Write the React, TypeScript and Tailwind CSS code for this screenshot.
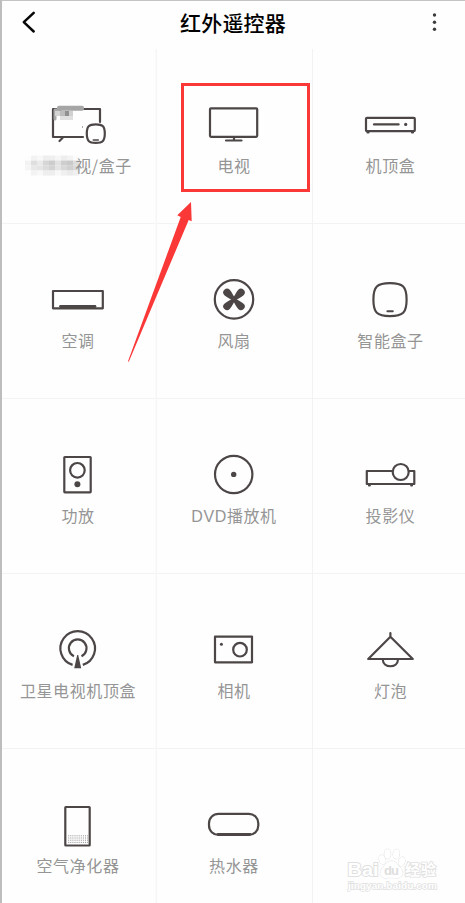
import type { ReactNode } from 'react';

const INK = '#4c4646';

const TvBoxIcon = () => (
  <>
    <path d="M5 12H-25V-16H22V-3" />
    <path d="M-18.5 16l3-3" />
    <path d="M-23 -6V-15H-18" stroke="#aaa" strokeWidth="3" />
    <rect x="-21" y="-19.3" width="27" height="5" rx="2" fill="#a5a5a5" stroke="none" />
    <g stroke="none">
      <rect x="-23" y="-14" width="5" height="5" fill="#d4d4d4" />
      <rect x="-18" y="-14" width="5" height="5" fill="#bcbcbc" />
      <rect x="-13" y="-14" width="4" height="5" fill="#909090" />
      <rect x="-9" y="-14" width="4" height="5" fill="#d0d0d0" />
      <rect x="-18" y="-9" width="13" height="4" fill="#e0e0e0" />
      <rect x="4" y="1" width="1" height="2" fill="#aaa" />
    </g>
    <path d="M17.8 -.6c7 0 9 2 9 9.2s-2 9.2-9 9.2-9-2-9-9.2 2-9.2 9-9.2Z" />
    <path d="M15.3 15h5" strokeWidth="1.6" />
  </>
);

const TvIcon = () => (
  <>
    <rect x="-24" y="-16.7" width="47.2" height="28.5" rx="1" />
    <path d="M-8 15.5H7.5M0 12v3" />
  </>
);

const SetTopIcon = () => (
  <>
    <rect x="-24" y="-7.2" width="48.8" height="13.4" rx="1" />
    <path d="M-16 -.6H8.6" />
    <circle cx="15.7" cy="-.6" r="1.6" fill={INK} stroke="none" />
    <path d="M-22.5 7.5h1M22 7.5h1" />
  </>
);

const AirConIcon = () => (
  <>
    <rect x="-25" y="-9" width="49.8" height="17.3" />
    <path d="M-17.5 6.5H17" strokeWidth="2.8" />
  </>
);

const bladeAngles = [45, 135, 225, 315];
const FanIcon = () => (
  <>
    <circle cx="0" cy="-.6" r="19.2" />
    <g fill={INK} stroke="none" transform="translate(0 -.6)">
      {bladeAngles.map((a) => (
        <path
          key={a}
          transform={`rotate(${a})`}
          d="M-1.600 1.600C-1.600 -3 -3.800 -6.500 -3.800 -9.800A3.800 3.800 0 0 1 3.800 -9.800C3.800 -6.500 1.600 -3 1.600 1.600Z"
        />
      ))}
    </g>
  </>
);

const SmartBoxIcon = () => (
  <>
    <path d="M0 -16.8c13 0 16.6 3.5 16.6 16.5s-3.6 16.5-16.6 16.5-16.6-3.5-16.6-16.5 3.6-16.5 16.6-16.5Z" />
    <path d="M-2.6 11.3H2.8" strokeWidth="2" />
  </>
);

const SpeakerIcon = () => (
  <>
    <rect x="-13.7" y="-18" width="26.4" height="35.3" rx=".5" />
    <circle cx="-.6" cy="-4.7" r="7.3" />
    <circle cx="-.6" cy="9.2" r="3" fill={INK} stroke="none" />
  </>
);

const DiscIcon = () => (
  <>
    <circle cx="-.3" cy="-.5" r="18.7" />
    <circle cx="-.3" cy="-.6" r="2.7" fill={INK} stroke="none" />
  </>
);

const ProjectorIcon = () => (
  <>
    <path d="M2.6 -4H-23.2V9H24.3V-4H19" />
    <circle cx="10.7" cy="-3" r="8" />
    <path d="M-21 10.5h.8M21.2 10.5h.8" />
  </>
);

const SatelliteIcon = () => (
  <>
    <path d="M-5.4 14.9A17.3 17.3 0 1 1 4.8 14.9" strokeLinecap="butt" />
    <path d="M-4.1 6.2A8.8 8.8 0 1 1 3.5 6.2" strokeLinecap="butt" />
    <path d="M-.8 5h1L3.2 18.3H-3.8Z" fill={INK} stroke="none" />
  </>
);

const CameraIcon = () => (
  <>
    <rect x="-19" y="-13.3" width="37" height="25.6" />
    <circle cx="6" cy="-.3" r="6.8" />
    <circle cx="-12.6" cy="-5.7" r="1.5" fill={INK} stroke="none" />
  </>
);

const LampIcon = () => (
  <>
    <path d="M.4 -16.8V-13.2L-21.8 9H22.8L.4 -13.2" />
    <path d="M-7.2 9.5C-7 18.5 7.8 18.5 8 9.5" />
  </>
);

const dotRows = [10.8, 13, 15.2, 17.4];
const PurifierIcon = () => (
  <>
    <rect x="-12.7" y="-18" width="24.4" height="38.5" rx=".5" />
    {dotRows.map((y) => (
      <path key={y} d={`M-9.8 ${y}H10`} stroke="#918e8e" strokeWidth="1" strokeDasharray="1 1.1" strokeLinecap="butt" />
    ))}
  </>
);

const HeaterIcon = () => (
  <>
    <rect x="-25" y="-11.2" width="49.3" height="21.2" rx="9.5" />
    <path d="M-16 9.3H16" strokeWidth="2.8" />
  </>
);

const mosaic = [
  ['#fdfdfd', '#f3f3f3', '#f8f8f8', '#eeeeee', '#efefef', '#f6f6f6', '#eeeeee', '#f3f3f3', '#fbfbfb'],
  ['#f3f3f3', '#dfdfdf', '#eaeaea', '#d6d6d6', '#cccccc', '#e2e2e2', '#cecece', '#c9c9c9', '#dedede'],
  ['#f5f5f5', '#e8e8e8', '#e5e5e5', '#dcdcdc', '#d3d3d3', '#e4e4e4', '#d8d8d8', '#d0d0d0', '#dadada'],
  ['#fdfdfd', '#f3f3f3', '#f8f8f8', '#eeeeee', '#eeeeee', '#f8f8f8', '#f0f0f0', '#ebebeb', '#f0f0f0'],
];

const CensoredName = () => (
  <svg width="50" height="20" viewBox="-1 -.5 50 20" className="mr-px shrink-0 overflow-visible">
    {mosaic.flatMap((row, r) =>
      row.map((c, i) => <rect key={`${r}-${i}`} x={i * 6} y={r * 5} width="6.1" height="5.1" fill={c} />),
    )}
  </svg>
);

const devices: { label: string; latin?: string; icon: ReactNode; censored?: boolean }[] = [
  { label: '视/盒子', icon: <TvBoxIcon />, censored: true },
  { label: '电视', icon: <TvIcon /> },
  { label: '机顶盒', icon: <SetTopIcon /> },
  { label: '空调', icon: <AirConIcon /> },
  { label: '风扇', icon: <FanIcon /> },
  { label: '智能盒子', icon: <SmartBoxIcon /> },
  { label: '功放', icon: <SpeakerIcon /> },
  { latin: 'DVD', label: '播放机', icon: <DiscIcon /> },
  { label: '投影仪', icon: <ProjectorIcon /> },
  { label: '卫星电视机顶盒', icon: <SatelliteIcon /> },
  { label: '相机', icon: <CameraIcon /> },
  { label: '灯泡', icon: <LampIcon /> },
  { label: '空气净化器', icon: <PurifierIcon /> },
  { label: '热水器', icon: <HeaterIcon /> },
  { label: '', icon: null },
];

const columnStyle = [
  'pr-[2px]',
  'border-l border-l-[#f6f6f6] pr-px shadow-[-1px_0_0_#fafafa]',
  'border-l border-l-[#f2f2f2]',
];

function Watermark() {
  return (
    <svg className="block" width="100" height="56" viewBox="344 844 100 56" fill="#fff" stroke="#e0e0e0" strokeWidth="1" paintOrder="stroke">
      <g fontFamily="Liberation Sans, Noto Sans CJK SC, sans-serif">
        <text x="347.5" y="876" fontSize="18" fontWeight="700" strokeWidth="1.8" textLength="31" lengthAdjust="spacingAndGlyphs">Bai</text>
        <ellipse cx="382.3" cy="859.5" rx="3.2" ry="4.6" transform="rotate(-15 382.3 859.5)" />
        <ellipse cx="387.5" cy="854" rx="3.2" ry="4.8" />
        <ellipse cx="396.3" cy="854" rx="3.2" ry="4.8" transform="rotate(10 396.3 854)" />
        <ellipse cx="401.8" cy="861.5" rx="3.2" ry="4.5" transform="rotate(20 401.8 861.5)" />
        <path d="M391.5 861c5 0 6.5 4.5 9.5 7.5s2.5 9.5-4 9.5c-4 0-7-.8-11 0-6 .5-7-5.5-4-9.5 3-3 4.5-7.5 9.5-7.5Z" />
        <text x="384" y="875" fontSize="13" fontWeight="700" fill="#dedede" stroke="none" textLength="15">du</text>
        <text x="405" y="875" fontSize="15" fontWeight="700" strokeWidth="1.7" textLength="31">经验</text>
        <text x="348" y="889" fontSize="9.5" fontWeight="700" strokeWidth="1.3" textLength="89" lengthAdjust="spacingAndGlyphs">jingyan.baidu.com</text>
      </g>
    </svg>
  );
}

export default function App() {
  return (
    <div className="relative h-[903px] w-[465px] overflow-hidden border-l-2 border-t border-l-[#bdbdbd] border-t-[#c4c4c4] bg-[#fefefe] font-['Noto_Sans_CJK_SC',sans-serif]">
      <header className="flex h-12 items-center justify-between pb-1 pl-[18px] pr-6">
        <svg width="18" height="26" viewBox="20 10 18 26" fill="none" stroke="#080808" strokeWidth="2.5" strokeLinecap="round" strokeLinejoin="round">
          <path d="M33.7 12.8 23.8 22.2 33.7 31.5" />
        </svg>
        <h1 className="-mt-[3px] text-[21px] font-medium leading-[30px] tracking-[0.2px] text-black">红外遥控器</h1>
        <svg width="13" height="26" viewBox="428 10 13 26" fill="#3c3c3c">
          <circle cx="434.5" cy="15" r="1.7" />
          <circle cx="434.5" cy="22.2" r="1.7" />
          <circle cx="434.5" cy="29.3" r="1.7" />
        </svg>
      </header>

      <main className="grid w-[465px] grid-cols-[154px_156px_155px]">
        {devices.map((d, i) => (
          <section
            key={i}
            className={`flex h-[175px] flex-col items-center border-b border-b-[#f3f3f3] pt-[46px] ${columnStyle[i % 3]}`}
          >
            <svg
              width="60"
              height="60"
              viewBox="-30 -30 60 60"
              fill="none"
              stroke={INK}
              strokeWidth="2.2"
              strokeLinecap="round"
              strokeLinejoin="round"
              className="shrink-0"
            >
              {d.icon}
            </svg>
            <div
              className={`-mt-px flex h-[22px] items-center whitespace-nowrap text-[16px] leading-[22px] tracking-[0.6px] text-[#959595] ${i % 3 === 2 ? 'pl-px' : ''}`}
            >
              {d.censored && <CensoredName />}
              <span>
                {d.latin && <span className="font-['Liberation_Sans',sans-serif] leading-none">{d.latin}</span>}
                {d.label}
              </span>
            </div>
          </section>
        ))}
      </main>

      <div className="absolute left-[179px] top-[82px] h-[109px] w-[129px] border-[3px] border-[#fb3838]" />
      <svg className="absolute left-[118px] top-[194px]" width="80" height="174" viewBox="120 195 80 174">
        <path d="M191 202 177.3 215.3 180.7 217 128 361.3 128.8 361.7 188.7 220 191.7 221.3Z" fill="#fb3838" />
      </svg>
      <div className="absolute left-[342px] top-[843px]">
        <Watermark />
      </div>
    </div>
  );
}
